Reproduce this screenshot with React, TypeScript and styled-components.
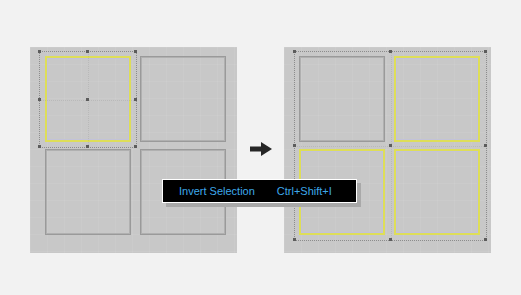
import React from 'react';
import styled, { createGlobalStyle } from 'styled-components';

const GlobalStyle = createGlobalStyle`
  html, body {
    margin: 0;
    padding: 0;
    background: #f2f2f2;
    font-family: "Liberation Sans", Arial, sans-serif;
  }
`;

const Stage = styled.div`
  position: relative;
  width: 521px;
  height: 295px;
  box-sizing: border-box;
  padding: 47px 0 0 30px;
  display: flex;
  align-items: flex-start;
`;

const Panel = styled.div`
  position: relative;
  width: 207px;
  height: 206px;
  box-sizing: border-box;
  padding: 9px 11px 18px 15px;
  display: grid;
  grid-template-columns: 86px 86px;
  grid-template-rows: 86px 86px;
  column-gap: 9px;
  row-gap: 7px;
  background-color: #c8c8c8;
  background-image:
    linear-gradient(to right, rgba(255, 255, 255, 0.06) 1px, transparent 1px),
    linear-gradient(to bottom, rgba(255, 255, 255, 0.06) 1px, transparent 1px);
  background-size: 17px 17px;
`;

const Square = styled.div<{ $selected?: boolean }>`
  box-sizing: border-box;
  border: ${(p) => (p.$selected ? '2px solid #dede58' : '1px solid #9a9a9a')};
  box-shadow: ${(p) =>
    p.$selected ? 'inset 0 0 0 1px #c2c2da' : 'inset 0 0 0 1px #b0b0b0'};
`;

const Selection = styled.div<{ $x: number; $y: number; $w: number; $h: number }>`
  position: absolute;
  left: ${(p) => p.$x}px;
  top: ${(p) => p.$y}px;
  width: ${(p) => p.$w}px;
  height: ${(p) => p.$h}px;
  box-sizing: border-box;
  border: 1px dotted #8c8c8c;
  pointer-events: none;
`;

const Guide = styled.div<{ $vertical?: boolean }>`
  position: absolute;
  ${(p) =>
    p.$vertical
      ? 'left: 50%; top: 0; bottom: 0; border-left: 1px dotted rgba(130,130,130,0.22);'
      : 'top: 50%; left: 0; right: 0; border-top: 1px dotted rgba(130,130,130,0.22);'}
`;

const Handle = styled.span<{ $px: number; $py: number }>`
  position: absolute;
  left: calc(${(p) => p.$px}% - 2px);
  top: calc(${(p) => p.$py}% - 2px);
  width: 3px;
  height: 3px;
  background: #5c5c5c;
`;

const Arrow = styled.svg`
  margin: 95px 12px 0 13px;
  flex: none;
`;

const Tooltip = styled.div`
  position: absolute;
  left: 162px;
  top: 179px;
  width: 195px;
  height: 24px;
  box-sizing: border-box;
  border: 1px solid #ffffff;
  background: #000;
  box-shadow: 4px 4px 0 #a9a9a9;
  display: flex;
  align-items: center;
  padding-left: 16px;
  gap: 22px;
  font-size: 11px;
  color: #3ea8ea;
  white-space: nowrap;
`;

const handlePoints = [
  [0, 0], [50, 0], [100, 0],
  [0, 50], [50, 50], [100, 50],
  [0, 100], [50, 100], [100, 100],
];

function SelectionBox({ x, y, w, h }: { x: number; y: number; w: number; h: number }) {
  return (
    <Selection $x={x} $y={y} $w={w} $h={h}>
      <Guide $vertical />
      <Guide />
      {handlePoints.map(([px, py]) => (
        <Handle key={`${px}-${py}`} $px={px} $py={py} />
      ))}
    </Selection>
  );
}

export default function App() {
  return (
    <>
      <GlobalStyle />
      <Stage>
        <Panel>
          <Square $selected />
          <Square />
          <Square />
          <Square />
          <SelectionBox x={9} y={4} w={98} h={97} />
        </Panel>
        <Arrow width="22" height="14" viewBox="0 0 22 14">
          <rect x="0" y="4.5" width="12" height="5" fill="#262626" />
          <polygon points="11,0 22,7 11,14" fill="#262626" />
        </Arrow>
        <Panel>
          <Square />
          <Square $selected />
          <Square $selected />
          <Square $selected />
          <SelectionBox x={10} y={4} w={193} h={190} />
        </Panel>
        <Tooltip>
          <span>Invert Selection</span>
          <span>Ctrl+Shift+I</span>
        </Tooltip>
      </Stage>
    </>
  );
}
